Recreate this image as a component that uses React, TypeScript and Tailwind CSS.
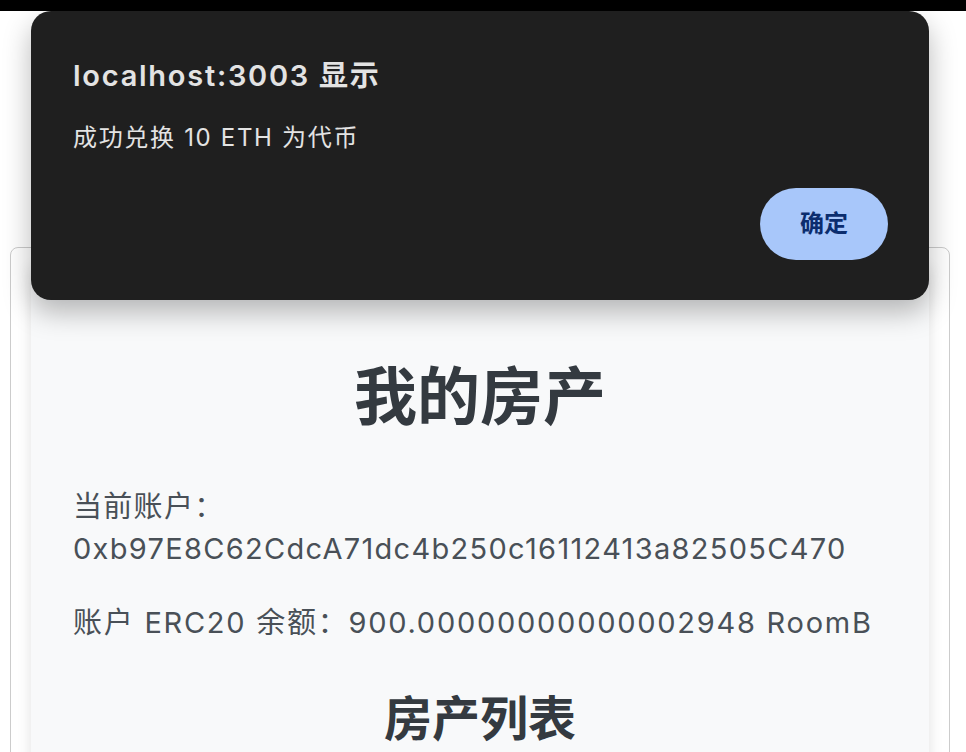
import React from "react";

const font = { fontFamily: '"Inter", "Noto Sans CJK SC", sans-serif' };

const AlertDialog = () => (
  <div className="absolute left-[31px] top-[11px] w-[898px] h-[289px] rounded-[20px] bg-[#1f1f1f] shadow-[0_12px_28px_rgba(0,0,0,0.28)] flex flex-col px-[42px]">
    <h2 className="mt-[47px] text-[29px] leading-[36px] font-semibold tracking-[0.06em] text-[#e3e3e3]">localhost:3003 显示</h2>
    <p className="mt-[28px] text-[24px] leading-[32px] tracking-[0.07em] text-[#e3e3e3]">成功兑换 10 ETH 为代币</p>
    <div className="mt-auto mb-[40px] flex justify-end">
      <button className="w-[128px] h-[72px] mr-[-1px] rounded-full bg-[#a8c7fa] text-[#0b2d6e] text-[24px] font-bold">确定</button>
    </div>
  </div>
);

export default function App() {
  return (
    <div className="relative w-[966px] h-[752px] overflow-hidden bg-white" style={font}>
      <div className="h-[11px] bg-black" />
      <div className="mt-[236px] ml-[10px] w-[940px] rounded-[8px] border border-[#cccccc] bg-white p-[20px]">
        <div className="bg-[#f8f9fa] shadow-[0_0_14px_rgba(0,0,0,0.12)] px-[42px] pt-[91px] pb-[40px] text-[#495057]">
          <h1 className="text-center text-[63px] leading-[74px] font-bold text-[#343a40]">我的房产</h1>
          <p className="mt-[53px] text-[29px] leading-[42px] tracking-[0.045em]">
            当前账户：
            <br />
            0xb97E8C62CdcA71dc4b250c16112413a82505C470
          </p>
          <p className="mt-[32px] text-[29px] leading-[42px] tracking-[0.06em] whitespace-nowrap">账户 ERC20 余额：900.00000000000002948 RoomB</p>
          <h2 className="mt-[45px] text-center text-[48px] leading-[60px] font-bold text-[#343a40]">房产列表</h2>
        </div>
      </div>
      <AlertDialog />
    </div>
  );
}
